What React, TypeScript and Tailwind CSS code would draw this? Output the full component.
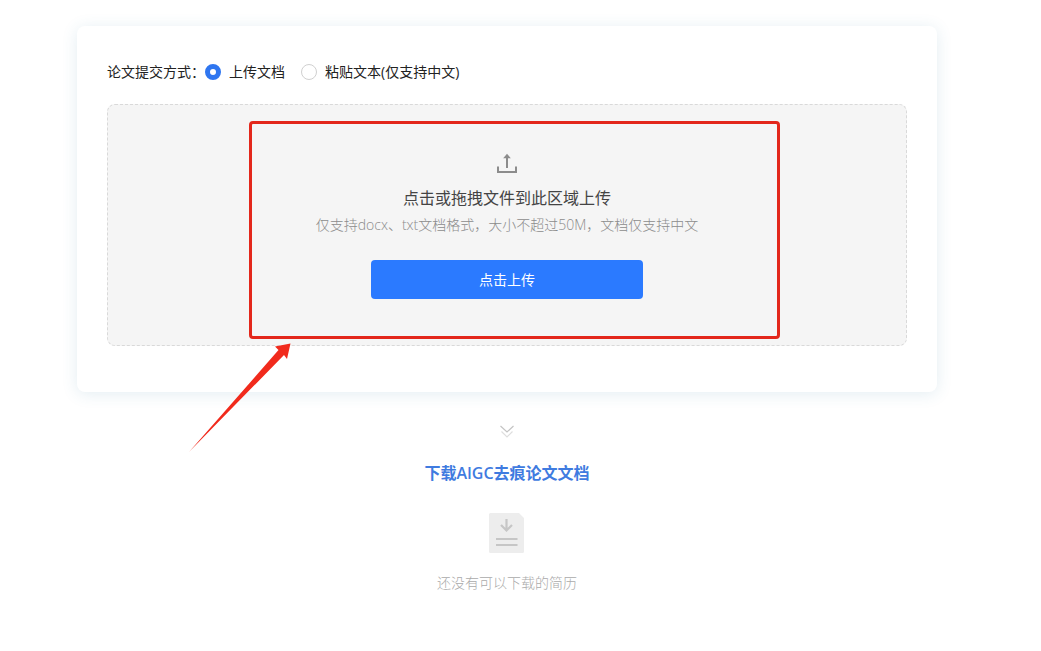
import { useState } from 'react'

const MODES = [
  {
    label: '上传文档',
    value: 'upload',
  },
  {
    label: '粘贴文本(仅支持中文)',
    value: 'paste',
  },
]

function UploadIcon() {
  return (
    <svg
      viewBox="0 0 24 24"
      fill="none"
      stroke="#8c8c8c"
      strokeWidth={2}
      className="h-6 w-6"
      aria-hidden="true"
    >
      <path d="M3 14.5V20h18v-5.5" />
      <path d="M12 16V4" />
      <path d="M8.2 6.2 12 1.8l3.8 4.4z" fill="#8c8c8c" stroke="none" />
    </svg>
  )
}

function DoubleChevronIcon() {
  return (
    <svg viewBox="0 0 16 16" fill="none" className="h-4 w-4" aria-hidden="true">
      <path d="m1.5 2 6.5 6 6.5-6" stroke="#c4c4c4" strokeWidth={1.2} />
      <path d="m2.500 7.500 5.500 5.500 5.500-5.500" stroke="#dedede" strokeWidth={1.2} />
    </svg>
  )
}

function DocumentIcon() {
  return (
    <svg viewBox="0 0 36 40" fill="none" className="h-10 w-9" aria-hidden="true">
      <path
        d="M1.500 0h28.500l5 5v33.500a1.500 1.500 0 0 1-1.500 1.500h-32a1.500 1.500 0 0 1-1.500-1.500v-37a1.500 1.500 0 0 1 1.500-1.500z"
        fill="#ededed"
      />
      <path
        d="M17.500 6v11M12 12l5.500 5.500 5.500-5.500"
        stroke="#c6c6c6"
        strokeWidth={2.2}
      />
      <path d="M7 26h21.500M7 32h21.500" stroke="#c6c6c6" strokeWidth={2} />
    </svg>
  )
}

// Red frame and pointer drawn over the drop area
function Highlight() {
  return (
    <div className="pointer-events-none absolute top-4 left-1/2 h-[218px] w-[531px] -translate-x-[258px] rounded-sm border-3 border-[#e3271b]">
      <svg
        viewBox="0 0 104 110"
        className="absolute top-[218px] right-full h-[110px] w-[104px] translate-x-10"
        aria-hidden="true"
      >
        <path
          d="M1 110 90.500 8 87 4.500 102.500 1.500 99 17 96 13z"
          fill="#f12a1c"
        />
      </svg>
    </div>
  )
}

function Dropzone() {
  return (
    <div className="relative mt-4 flex flex-col items-center rounded-lg border border-dashed border-[#d9d9d9] bg-[#f5f5f5] pt-[47px] pb-[46px]">
      <UploadIcon />
      <p className="mt-[10px] text-base leading-6 text-[#444]">
        点击或拖拽文件到此区域上传
      </p>
      <p className="mt-[5px] text-sm leading-5 font-light text-[#8c8c8c]">
        仅支持docx、txt文档格式，大小不超过50M，文档仅支持中文
      </p>
      <button
        type="button"
        className="mt-[25px] h-[39px] w-[272px] cursor-pointer rounded bg-[#2b7aff] text-sm text-white"
      >
        点击上传
      </button>
      <Highlight />
    </div>
  )
}

function App() {
  const [mode, setMode] = useState('upload')

  return (
    <main className="flex flex-col items-center bg-white pt-[26px] pr-[27px] font-['Open_Sans','Noto_Sans_CJK_SC',sans-serif]">
      <section className="w-full max-w-[860px] rounded-lg bg-white px-[30px] pt-[30px] pb-[46px] shadow-[0_2px_16px_rgba(60,130,160,0.14)]">
        <fieldset className="flex h-8 items-center text-sm text-[#222]">
          <legend className="float-left">论文提交方式：</legend>
          <div className="flex gap-4">
            {MODES.map(({ label, value }) => (
              <label key={value} className="flex items-center gap-2">
                <input
                  type="radio"
                  name="mode"
                  value={value}
                  checked={mode === value}
                  onChange={() => setMode(value)}
                  className="h-4 w-4 appearance-none rounded-full border border-[#d0d0d0] bg-white checked:border-5 checked:border-[#2f76f0]"
                />
                {label}
              </label>
            ))}
          </div>
        </fieldset>
        <Dropzone />
      </section>
      <section className="mt-8 flex flex-col items-center">
        <DoubleChevronIcon />
        <h2 className="mt-[21px] text-base leading-6 font-semibold text-[#3f7be0]">
          下载AIGC去痕论文文档
        </h2>
        <div className="mt-7">
          <DocumentIcon />
        </div>
        <p className="mt-5 text-sm leading-5 font-light text-[#aaa]">
          还没有可以下载的简历
        </p>
      </section>
    </main>
  )
}

export default App
